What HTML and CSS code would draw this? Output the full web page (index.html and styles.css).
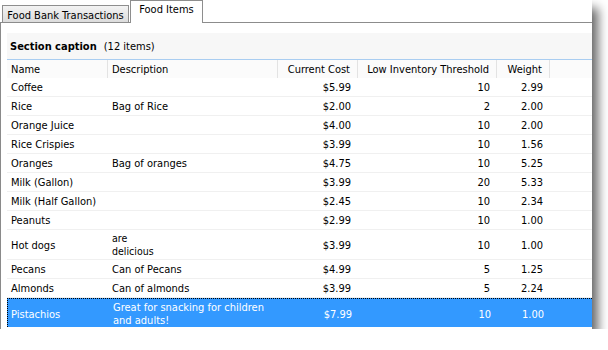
FILE: index.html
```html
<!DOCTYPE html>
<html>
<head>
<meta charset="utf-8">
<link rel="stylesheet" href="styles.css">
</head>
<body>
<div class="window">
  <div class="tabs">
    <div class="tab">Food Bank Transactions</div>
    <div class="tab active">Food Items</div>
  </div>
  <div class="panel">
    <div class="caption"><b>Section caption</b><span class="count">(12 items)</span></div>
    <div class="grid">
      <div class="row head">
        <div class="cell">Name</div>
        <div class="cell">Description</div>
        <div class="cell num">Current Cost</div>
        <div class="cell num">Low Inventory Threshold</div>
        <div class="cell num">Weight</div>
        <div class="cell last"></div>
      </div>
      <div class="row"><div class="cell">Coffee</div><div class="cell"></div><div class="cell num">$5.99</div><div class="cell num">10</div><div class="cell num">2.99</div><div class="cell"></div></div>
      <div class="row"><div class="cell">Rice</div><div class="cell">Bag of Rice</div><div class="cell num">$2.00</div><div class="cell num">2</div><div class="cell num">2.00</div><div class="cell"></div></div>
      <div class="row"><div class="cell">Orange Juice</div><div class="cell"></div><div class="cell num">$4.00</div><div class="cell num">10</div><div class="cell num">2.00</div><div class="cell"></div></div>
      <div class="row"><div class="cell">Rice Crispies</div><div class="cell"></div><div class="cell num">$3.99</div><div class="cell num">10</div><div class="cell num">1.56</div><div class="cell"></div></div>
      <div class="row"><div class="cell">Oranges</div><div class="cell">Bag of oranges</div><div class="cell num">$4.75</div><div class="cell num">10</div><div class="cell num">5.25</div><div class="cell"></div></div>
      <div class="row"><div class="cell">Milk (Gallon)</div><div class="cell"></div><div class="cell num">$3.99</div><div class="cell num">20</div><div class="cell num">5.33</div><div class="cell"></div></div>
      <div class="row"><div class="cell">Milk (Half Gallon)</div><div class="cell"></div><div class="cell num">$2.45</div><div class="cell num">10</div><div class="cell num">2.34</div><div class="cell"></div></div>
      <div class="row"><div class="cell">Peanuts</div><div class="cell"></div><div class="cell num">$2.99</div><div class="cell num">10</div><div class="cell num">1.00</div><div class="cell"></div></div>
      <div class="row tall"><div class="cell">Hot dogs</div><div class="cell multi small">are<br>delicious</div><div class="cell num">$3.99</div><div class="cell num">10</div><div class="cell num">1.00</div><div class="cell"></div></div>
      <div class="row"><div class="cell">Pecans</div><div class="cell">Can of Pecans</div><div class="cell num">$4.99</div><div class="cell num">5</div><div class="cell num">1.25</div><div class="cell"></div></div>
      <div class="row"><div class="cell">Almonds</div><div class="cell">Can of almonds</div><div class="cell num">$3.99</div><div class="cell num">5</div><div class="cell num">2.24</div><div class="cell"></div></div>
      <div class="row tall selected"><div class="cell">Pistachios</div><div class="cell multi">Great for snacking for children<br>and adults!</div><div class="cell num">$7.99</div><div class="cell num">10</div><div class="cell num">1.00</div><div class="cell"></div></div>
    </div>
  </div>
</div>
</body>
</html>
```

FILE: styles.css
```css
html, body {
  margin: 0;
  padding: 0;
  background: #fff;
}
body {
  font-family: "DejaVu Sans Condensed", "DejaVu Sans", sans-serif;
  font-size: 11px;
  color: #000;
}
.window {
  width: 592px;
  height: 329px;
  background: #fff;
  box-shadow: 6px 8px 10px rgba(0, 0, 0, 0.6);
  display: flex;
  flex-direction: column;
}
.tabs {
  display: flex;
  align-items: flex-end;
  height: 22px;
  padding-left: 2px;
  border-bottom: 1px solid #8c8c8c;
}
.tab {
  box-sizing: border-box;
  height: 17px;
  width: 127px;
  border: 1px solid #8e8e8e;
  border-bottom: none;
  background: linear-gradient(#f3f3f3, #dcdcdc);
  text-align: center;
  line-height: 17px;
  padding-top: 1px;
}
.tab.active {
  width: 73px;
  height: 23px;
  margin-bottom: -1px;
  margin-left: 1px;
  background: #fff;
  line-height: 18px;
  padding-top: 0;
  position: relative;
}
.panel {
  flex: 1;
  border-left: 1px solid #8a8a8a;
  padding: 10px 0 0 6px;
}
.caption {
  height: 26px;
  background: #f7f7f7;
  border-bottom: 1px solid #a9cdf1;
  padding-left: 3px;
  display: flex;
  align-items: center;
  gap: 7px;
}
.caption b {
  font-weight: bold;
}
.row {
  display: grid;
  grid-template-columns: 101px 170px 80px 139px 53px 1fr;
  height: 19px;
  box-sizing: border-box;
  border-bottom: 1px solid #f0f0f0;
}
.row.head {
  height: 18px;
  border-bottom: none;
  background: #fbfbfb;
}
.row.head .cell {
  border-right: 1px solid #e3e3e3;
  padding-top: 0;
}
.row.head .cell.last {
  border-right: none;
}
.cell {
  display: flex;
  align-items: center;
  padding-left: 4px;
  padding-top: 1px;
  white-space: nowrap;
  overflow: hidden;
}
.cell.num {
  justify-content: flex-end;
  padding-left: 0;
  padding-right: 7px;
}
.row.tall {
  height: 30px;
}
.cell.multi {
  line-height: 13px;
}
.cell.small {
  font-size: 10.5px;
}
.row.selected {
  height: 29px;
  border-bottom: none;
  background: #3399ff;
  color: #fff;
  border-top: 1px dotted #000;
  border-left: 1px dotted #000;
}
.row.selected .cell {
  padding-top: 2px;
}
.row.selected .cell:first-child {
  padding-left: 3px;
}
```
